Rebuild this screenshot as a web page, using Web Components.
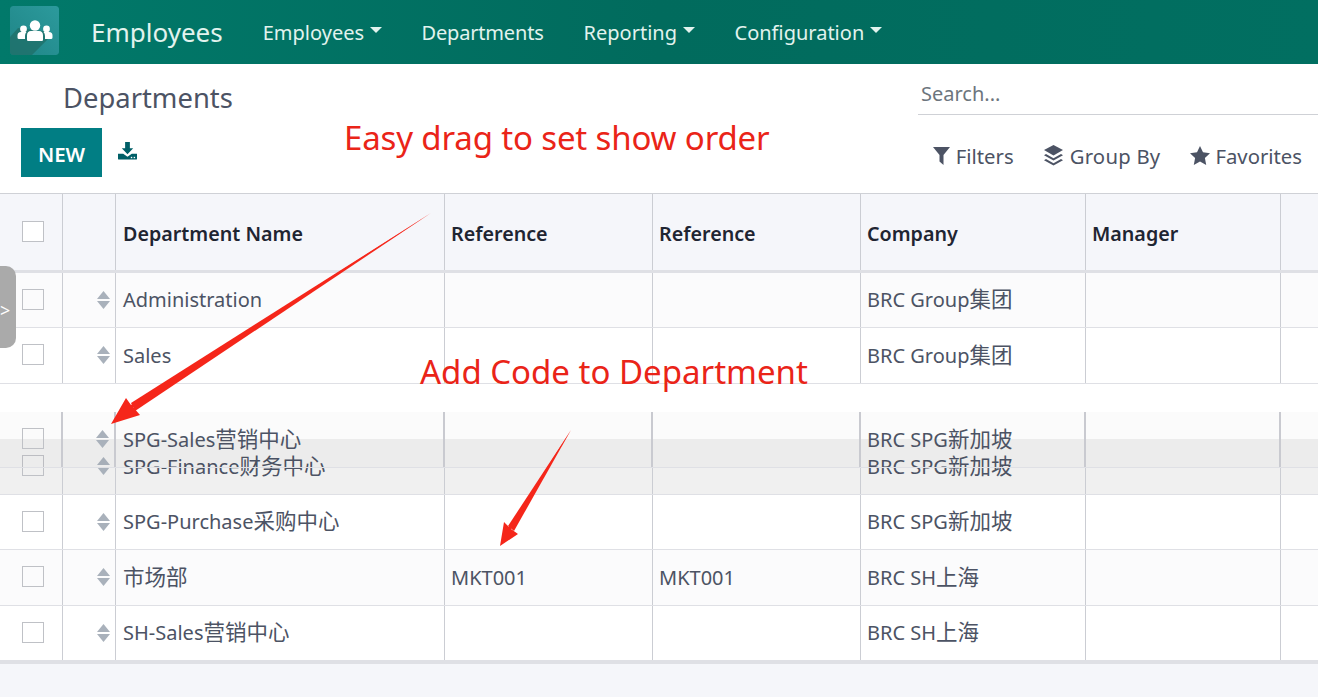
<!DOCTYPE html>
<html>
<head>
<meta charset="utf-8">
<title>Departments</title>
<style>
  html, body { margin: 0; padding: 0; height: 100%; }
  body {
    background: #f5f6fa;
    font-family: "Noto Sans", "Noto Sans CJK SC", sans-serif;
    overflow: hidden;
  }
</style>
</head>
<body>
<app-shell>
  <app-navbar title="Employees">
    <nav-item caret>Employees</nav-item>
    <nav-item style="letter-spacing:-.18px">Departments</nav-item>
    <nav-item caret>Reporting</nav-item>
    <nav-item caret>Configuration</nav-item>
  </app-navbar>
  <control-panel title="Departments"></control-panel>
  <list-table>
    <list-row striped name="Administration" company="BRC Group集团"></list-row>
    <list-row name="Sales" company="BRC Group集团"></list-row>
    <list-row blank></list-row>
    <list-row placeholder name="SPG-Finance财务中心" company="BRC SPG新加坡"></list-row>
    <list-row name="SPG-Purchase采购中心" company="BRC SPG新加坡"></list-row>
    <list-row striped name="市场部" code="MKT001" company="BRC SH上海"></list-row>
    <list-row name="SH-Sales营销中心" company="BRC SH上海"></list-row>
    <list-row dragging name="SPG-Sales营销中心" company="BRC SPG新加坡"></list-row>
  </list-table>
  <side-tab></side-tab>
  <note-layer></note-layer>
</app-shell>

<script>
class AppShell extends HTMLElement {
  constructor() {
    super();
    this.attachShadow({ mode: "open" });
    this.shadowRoot.innerHTML = `
      <style>
        :host { display: block; position: relative; height: 697px; overflow: hidden; }
      </style>
      <slot></slot>`;
  }
}

class AppNavbar extends HTMLElement {
  constructor() {
    super();
    this.attachShadow({ mode: "open" });
    this.shadowRoot.innerHTML = `
      <style>
        :host {
          display: flex; align-items: center; height: 64px; padding-left: 10px;
          background: linear-gradient(90deg, #01796a 0%, #016b5d 50%, #016f61 100%);
          color: #e2f3ee;
        }
        .logo { width: 49px; height: 49px; margin-top: -4px; display: block; border-radius: 3px; }
        .brand { font-size: 26px; margin-left: 32px; margin-right: 40px; }
        .menu { display: flex; gap: 40px; }
      </style>
      <svg class="logo" viewBox="0 0 49 49">
        <defs>
          <linearGradient id="lg" x1="1" y1="0" x2="0" y2="1">
            <stop offset="0" stop-color="#2c9a9c"/>
            <stop offset="1" stop-color="#1f8587"/>
          </linearGradient>
        </defs>
        <rect width="49" height="49" rx="3" fill="url(#lg)"/>
        <path d="M0 31 L8 22 L40 26 L40 31 L22 49 L3 49 Q0 49 0 46 Z" fill="#1f6d67" opacity=".75"/>
        <g fill="#fff">
          <circle cx="25" cy="19.500" r="5.200"/>
          <circle cx="13.500" cy="23" r="3.400"/>
          <circle cx="36.500" cy="23" r="3.400"/>
          <path d="M18 35 q-1 0 -1 -1.500 v-4 q0 -4.500 4 -4.500 h8 q4 0 4 4.500 v4 q0 1.500 -1 1.500 Z"/>
          <path d="M15 33 h-6 q-1.500 0 -1.500 -1.500 v-2 q0 -3.500 3.500 -3.500 h5.500 q-1.500 1.500 -1.500 4 Z"/>
          <path d="M35 33 h6 q1.500 0 1.500 -1.500 v-2 q0 -3.500 -3.500 -3.500 h-5.500 q1.500 1.500 1.500 4 Z"/>
        </g>
      </svg>
      <span class="brand">${this.getAttribute("title")}</span>
      <div class="menu"><slot></slot></div>`;
  }
}

class NavItem extends HTMLElement {
  constructor() {
    super();
    this.attachShadow({ mode: "open" });
    this.shadowRoot.innerHTML = `
      <style>
        :host { display: inline-flex; align-items: center; font-size: 20px; }
        .caret {
          width: 0; height: 0; margin-left: 5.500px; margin-top: -4px;
          border-left: 6px solid transparent; border-right: 6px solid transparent;
          border-top: 6px solid currentColor;
        }
      </style>
      <slot></slot>${this.hasAttribute("caret") ? '<span class="caret"></span>' : ""}`;
  }
}

class ControlPanel extends HTMLElement {
  constructor() {
    super();
    this.attachShadow({ mode: "open" });
    this.shadowRoot.innerHTML = `
      <style>
        :host { display: block; height: 129px; background: #fff; color: #4c5364; box-sizing: border-box; }
        .top { display: flex; justify-content: space-between; height: 64px; }
        h1 { margin: 13px 0 0 63px; font-size: 27.400px; font-weight: 400; line-height: 42px; }
        .search {
          width: 397px; height: 50px; padding-left: 3px; border-bottom: 1px solid #cfd1d6;
          font-size: 20px; line-height: 60px; color: #6c757d;
        }
        .bottom { display: flex; align-items: center; justify-content: space-between; height: 49px; padding: 0 16px 0 21px; }
        .left { display: flex; align-items: center; gap: 16px; }
        .new {
          width: 81px; height: 49px; display: flex; align-items: center; justify-content: center;
          background: #017e84; color: #fff; font-size: 20.500px; font-weight: 600; padding-top: 3px; box-sizing: border-box;
        }
        .dl { width: 19px; height: 18px; display: block; margin-top: -3px; }
        .right { display: flex; gap: 31px; margin-top: 6px; font-size: 20.300px; }
        .tool { display: flex; align-items: center; gap: 6px; }
        .tool:first-child { margin-right: -2px; }
        .tool.group { letter-spacing: .25px; }
        .tool.fav { gap: 5px; margin-left: -1px; }
        .tool svg { display: block; fill: currentColor; }
      </style>
      <div class="top">
        <h1>${this.getAttribute("title")}</h1>
        <div class="search">Search...</div>
      </div>
      <div class="bottom">
        <div class="left">
          <div class="new">NEW</div>
          <svg class="dl" viewBox="0 0 20 20" fill="#005f67" preserveAspectRatio="none">
            <path d="M7.500 0 h5 v7 h3.500 L10 13.500 L4 7 h3.500 Z"/>
            <path d="M0 13 h5.500 L10 16.500 L14.500 13 H20 v5.500 q0 1 -1 1 H1 q-1 0 -1 -1 Z"/>
            <rect x="13.500" y="16.500" width="1.500" height="1.500" fill="#fff"/>
            <rect x="16.500" y="16.500" width="1.500" height="1.500" fill="#fff"/>
          </svg>
        </div>
        <div class="right">
          <div class="tool">
            <svg width="17" height="18" viewBox="0 0 17 18"><path d="M0 0 H17 L10.500 8 V18 L6.500 14.500 V8 Z"/></svg>Filters
          </div>
          <div class="tool group">
            <svg width="21" height="21" viewBox="0 0 21 21">
              <path d="M10.500 0 L20 5 L10.500 10.500 L1 5 Z"/>
              <path d="M3 9 L1 10.200 L10.500 15.500 L20 10.200 L18 9 L10.500 13.200 Z"/>
              <path d="M3 14 L1 15.200 L10.500 20.500 L20 15.200 L18 14 L10.500 18.200 Z"/>
            </svg>Group By
          </div>
          <div class="tool fav">
            <svg width="20" height="19" viewBox="0 0 20 19"><path d="M10 0 L13 6.300 L20 7.200 L14.900 12 L16.200 19 L10 15.600 L3.800 19 L5.100 12 L0 7.200 L7 6.300 Z"/></svg>Favorites
          </div>
        </div>
      </div>`;
  }
}

const COLUMNS = "63px 53px 329px 208px 208px 225px 195px 1fr";

class ListTable extends HTMLElement {
  constructor() {
    super();
    this.attachShadow({ mode: "open" });
    this.shadowRoot.innerHTML = `
      <style>
        :host {
          display: block; position: relative; background: #fff;
          font-size: 20px; color: #4c5364;
          --columns: ${COLUMNS};
        }
        .head {
          display: grid; grid-template-columns: var(--columns); height: 75.500px;
          background: #f5f6fa; border-top: 1px solid #cfd1d6; border-bottom: 3px solid #dfe0e5;
          font-size: 19.700px; font-weight: 600; color: #1f2532;
        }
        .head > div { display: flex; align-items: center; padding: 4px 0 0 6px; border-right: 1px solid #cbcdd3; }
        .head > div:nth-child(3) { padding-left: 7px; }
        .head > div:last-child { border-right: 0; }
        .head .box { padding: 0 0 0 22px; }
        .box i { width: 20px; height: 19px; border: 1px solid #bfc1c6; display: block; background: #fff; }
        .foot { height: 0; border-top: 3px solid #dfe0e5; }
      </style>
      <div class="head">
        <div class="box"><i></i></div>
        <div></div>
        <div>Department Name</div>
        <div>Reference</div>
        <div>Reference</div>
        <div>Company</div>
        <div>Manager</div>
        <div></div>
      </div>
      <slot></slot>
      <div class="foot"></div>`;
  }
}

// the Chinese part of a cell is set a little larger than the latin part
const cjk = (text) => text.replace(/[\u4e00-\u9fff]+/g, (m) => `<span class="cjk">${m}</span>`);

class ListRow extends HTMLElement {
  constructor() {
    super();
    this.attachShadow({ mode: "open" });
    const code = this.getAttribute("code") || "";
    const cells = this.hasAttribute("blank") ? "" : `
      <div class="c box"><i></i></div>
      <div class="c handle">
        <svg width="13" height="18" viewBox="0 0 13 18" fill="#a9b1bb">
          <path d="M6.500 0 L13 8 H0 Z"/><path d="M0 10 H13 L6.500 18 Z"/>
        </svg>
      </div>
      <div class="c name"><span>${cjk(this.getAttribute("name"))}</span></div>
      <div class="c"><span>${code}</span></div>
      <div class="c"><span>${code}</span></div>
      <div class="c"><span>${cjk(this.getAttribute("company"))}</span></div>
      <div class="c"></div>
      <div class="c"></div>`;
    this.shadowRoot.innerHTML = `
      <style>
        :host {
          display: grid; grid-template-columns: var(--columns); height: 55.500px;
          box-sizing: border-box; border-bottom: 1px solid #dfe0e5; background: #fff;
        }
        :host([striped]) { background: #fbfbfc; }
        :host([blank]) { border-bottom: 0; }
        :host([placeholder]) { background: #f0f0f0; }
        :host([dragging]) {
          position: absolute; left: 0; right: 0; top: 219px;
          background: rgba(0, 0, 0, .014);
        }
        .c { display: flex; align-items: center; padding-left: 6px; border-right: 1px solid #cbcdd3; white-space: nowrap; }
        .c.name { padding-left: 7px; }
        .c:last-child { border-right: 0; }
        :host([dragging]) .c { border-right-width: 2px; border-right-color: #c9cad0; }
        :host([dragging]) .c:last-child { border-right: 0; }
        .cjk { font-size: 21.500px; line-height: 0; }
        .box { padding-left: 22px; }
        .box i { width: 20px; height: 19px; margin-top: -1px; border: 1px solid #bfc1c6; display: block; background: transparent; }
        .handle { justify-content: flex-end; padding: 0 5px 0 0; }
      </style>
      ${cells}`;
  }
}

class SideTab extends HTMLElement {
  constructor() {
    super();
    this.attachShadow({ mode: "open" });
    this.shadowRoot.innerHTML = `
      <style>
        :host {
          position: absolute; left: 0; top: 266px; width: 16px; height: 82px;
          background: #aaaaaa; border-radius: 0 10px 10px 0; overflow: hidden;
          display: flex; align-items: center; color: #fff; font-size: 18px;
        }
        span { margin-top: 6px; }
      </style>
      <span>&gt;</span>`;
  }
}

class NoteLayer extends HTMLElement {
  constructor() {
    super();
    this.attachShadow({ mode: "open" });
    this.shadowRoot.innerHTML = `
      <style>
        :host { position: absolute; inset: 0; pointer-events: none; }
        svg { position: absolute; left: 0; top: 0; }
        .note { position: absolute; color: #ea2418; font-size: 33px; line-height: 44px; white-space: nowrap; }
      </style>
      <div class="note" style="left:344px;top:116px;letter-spacing:-.15px">Easy drag to set show order</div>
      <div class="note" style="left:420px;top:350px">Add Code to Department</div>
      <svg width="1318" height="697">
        <path d="M431 213 L133 407 L140 415 L111 424 L126 398 L131 405 Z" fill="#f5261a"/>
        <path d="M431 213 L131 403 L135 411 Z" fill="#f5261a"/>
        <path d="M571 430 L511 529 L518 534 L500 546 L504 522 L509 527 Z" fill="#f5261a"/>
        <path d="M571 430 L508 526 L514 531 Z" fill="#f5261a"/>
      </svg>`;
  }
}

customElements.define("app-shell", AppShell);
customElements.define("app-navbar", AppNavbar);
customElements.define("nav-item", NavItem);
customElements.define("control-panel", ControlPanel);
customElements.define("list-table", ListTable);
customElements.define("list-row", ListRow);
customElements.define("side-tab", SideTab);
customElements.define("note-layer", NoteLayer);
</script>
</body>
</html>
